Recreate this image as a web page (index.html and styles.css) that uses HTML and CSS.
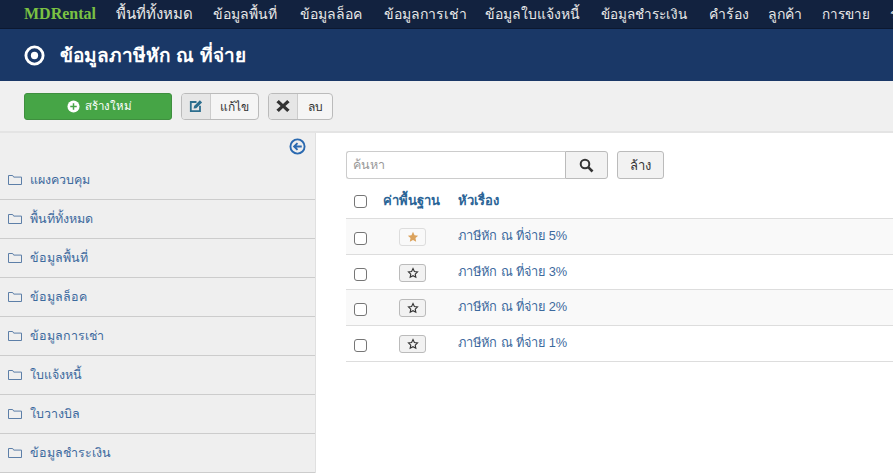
FILE: index.html
```html
<!DOCTYPE html>
<html lang="th">
<head>
<meta charset="utf-8">
<title>ข้อมูลภาษีหัก ณ ที่จ่าย</title>
<link rel="stylesheet" href="styles.css">
</head>
<body>
<nav class="nav">
  <a class="brand">MDRental</a>
  <a class="nav-item">พื้นที่ทั้งหมด</a>
  <a class="nav-item">ข้อมูลพื้นที่</a>
  <a class="nav-item">ข้อมูลล็อค</a>
  <a class="nav-item">ข้อมูลการเช่า</a>
  <a class="nav-item">ข้อมูลใบแจ้งหนี้</a>
  <a class="nav-item">ข้อมูลชำระเงิน</a>
  <a class="nav-item">คำร้อง</a>
  <a class="nav-item">ลูกค้า</a>
  <a class="nav-item">การขาย</a>
  <a class="nav-item">รายงาน</a>
</nav>
<header class="title-bar">
  <svg class="title-icon" viewBox="0 0 22 22"><circle cx="11" cy="11" r="9" fill="none" stroke="#fff" stroke-width="3"/><circle cx="11" cy="11" r="3.8" fill="#fff"/></svg>
  <h1 class="title">ข้อมูลภาษีหัก ณ ที่จ่าย</h1>
</header>
<div class="toolbar">
  <button class="btn-new">
    <svg class="plus" viewBox="0 0 14 14"><circle cx="7" cy="7" r="6.5" fill="#fff"/><path d="M7 3.5v7M3.5 7h7" stroke="#46a546" stroke-width="1.6"/></svg>
    สร้างใหม่
  </button>
  <div class="btn-group edit">
    <span class="btn-icon"><svg viewBox="0 0 14 14" width="14" height="14"><path d="M7.5 3H1.8v9.2H11V6.8" fill="none" stroke="#2d6e8e" stroke-width="1.8"/><path d="M4.6 9.6l.5-2.6 5.8-5.8 2.2 2.2-5.8 5.8z" fill="#2d6e8e"/></svg></span>
    <span class="btn-label">แก้ไข</span>
  </div>
  <div class="btn-group del">
    <span class="btn-icon"><svg viewBox="0 0 14 14" width="14" height="14"><path d="M2.8 1L7 5 11.2 1 13.6 3.2 9.4 7l4.2 3.8-2.4 2.2L7 9 2.8 13 .4 10.8 4.6 7 .4 3.2z" fill="#333"/></svg></span>
    <span class="btn-label">ลบ</span>
  </div>
</div>
<div class="main">
  <aside class="sidebar">
    <div class="collapse">
      <svg viewBox="0 0 18 18" width="17" height="17"><circle cx="9" cy="9" r="7.5" fill="none" stroke="#2a69b0" stroke-width="2"/><path d="M13.5 9H6M9 5.4L5.4 9 9 12.6" fill="none" stroke="#2a69b0" stroke-width="2"/></svg>
    </div>
    <ul class="side-list">
      <li class="side-item"><svg class="folder" viewBox="0 0 14 12"><path d="M.5 10.5v-9h4.2l1 1.6h7.8v7.4z" fill="none" stroke="#5d7fa8"/></svg>แผงควบคุม</li>
      <li class="side-item"><svg class="folder" viewBox="0 0 14 12"><path d="M.5 10.5v-9h4.2l1 1.6h7.8v7.4z" fill="none" stroke="#5d7fa8"/></svg>พื้นที่ทั้งหมด</li>
      <li class="side-item"><svg class="folder" viewBox="0 0 14 12"><path d="M.5 10.5v-9h4.2l1 1.6h7.8v7.4z" fill="none" stroke="#5d7fa8"/></svg>ข้อมูลพื้นที่</li>
      <li class="side-item"><svg class="folder" viewBox="0 0 14 12"><path d="M.5 10.5v-9h4.2l1 1.6h7.8v7.4z" fill="none" stroke="#5d7fa8"/></svg>ข้อมูลล็อค</li>
      <li class="side-item"><svg class="folder" viewBox="0 0 14 12"><path d="M.5 10.5v-9h4.2l1 1.6h7.8v7.4z" fill="none" stroke="#5d7fa8"/></svg>ข้อมูลการเช่า</li>
      <li class="side-item"><svg class="folder" viewBox="0 0 14 12"><path d="M.5 10.5v-9h4.2l1 1.6h7.8v7.4z" fill="none" stroke="#5d7fa8"/></svg>ใบแจ้งหนี้</li>
      <li class="side-item"><svg class="folder" viewBox="0 0 14 12"><path d="M.5 10.5v-9h4.2l1 1.6h7.8v7.4z" fill="none" stroke="#5d7fa8"/></svg>ใบวางบิล</li>
      <li class="side-item"><svg class="folder" viewBox="0 0 14 12"><path d="M.5 10.5v-9h4.2l1 1.6h7.8v7.4z" fill="none" stroke="#5d7fa8"/></svg>ข้อมูลชำระเงิน</li>
    </ul>
  </aside>
  <section class="content">
    <div class="search-row">
      <div class="search">
        <input class="search-input" type="text" placeholder="ค้นหา">
        <span class="search-btn"><svg viewBox="0 0 15 15" width="15" height="15"><circle cx="6" cy="6" r="4.3" fill="none" stroke="#333" stroke-width="2"/><path d="M9.2 9.2l4.3 4.3" stroke="#333" stroke-width="2.6"/></svg></span>
      </div>
      <button class="btn-clear">ล้าง</button>
    </div>
    <div class="row head">
      <span class="cell-check"><input type="checkbox" class="check"></span>
      <span class="cell-default head-text">ค่าพื้นฐาน</span>
      <span class="cell-title head-text">หัวเรื่อง</span>
    </div>
    <div class="row odd">
      <span class="cell-check"><input type="checkbox" class="check"></span>
      <span class="cell-default"><span class="star-btn on"><svg viewBox="0 0 14 14" width="12" height="12"><path d="M7 1l1.8 3.9 4.2.5-3.1 2.9.8 4.2L7 10.5 3.3 12.5l.8-4.2L1 5.4l4.2-.5z" fill="#dba25c"/></svg></span></span>
      <span class="cell-title">ภาษีหัก ณ ที่จ่าย 5%</span>
    </div>
    <div class="row short">
      <span class="cell-check"><input type="checkbox" class="check"></span>
      <span class="cell-default"><span class="star-btn"><svg viewBox="0 0 14 14" width="12" height="12"><path d="M7 1.8l1.6 3.4 3.7.5-2.7 2.6.7 3.7L7 10.2l-3.3 1.8.7-3.7-2.7-2.6 3.7-.5z" fill="none" stroke="#333" stroke-width="1.3"/></svg></span></span>
      <span class="cell-title">ภาษีหัก ณ ที่จ่าย 3%</span>
    </div>
    <div class="row odd">
      <span class="cell-check"><input type="checkbox" class="check"></span>
      <span class="cell-default"><span class="star-btn"><svg viewBox="0 0 14 14" width="12" height="12"><path d="M7 1.8l1.6 3.4 3.7.5-2.7 2.6.7 3.7L7 10.2l-3.3 1.8.7-3.7-2.7-2.6 3.7-.5z" fill="none" stroke="#333" stroke-width="1.3"/></svg></span></span>
      <span class="cell-title">ภาษีหัก ณ ที่จ่าย 2%</span>
    </div>
    <div class="row">
      <span class="cell-check"><input type="checkbox" class="check"></span>
      <span class="cell-default"><span class="star-btn"><svg viewBox="0 0 14 14" width="12" height="12"><path d="M7 1.8l1.6 3.4 3.7.5-2.7 2.6.7 3.7L7 10.2l-3.3 1.8.7-3.7-2.7-2.6 3.7-.5z" fill="none" stroke="#333" stroke-width="1.3"/></svg></span></span>
      <span class="cell-title">ภาษีหัก ณ ที่จ่าย 1%</span>
    </div>
  </section>
</div>
</body>
</html>
```
FILE: styles.css
```css
* { box-sizing: border-box; }
html, body { margin: 0; padding: 0; }
body {
  width: 893px;
  height: 473px;
  overflow: hidden;
  background: #fff;
  font-family: "Liberation Sans", "Noto Sans", sans-serif;
  font-size: 13px;
  color: #333;
}
.nav {
  display: flex;
  align-items: center;
  height: 29px;
  padding-left: 24px;
  background: #12223f;
  border-bottom: 1px solid #0c1830;
  white-space: nowrap;
  overflow: hidden;
}
.brand {
  font-family: "Liberation Serif", serif;
  font-weight: 700;
  font-size: 16px;
  color: #7ac143;
  margin-right: 20px;
}
.nav-item {
  color: #e8e8e8;
  font-size: 14px;
  flex: none;
}
.nav-item:nth-child(2) { width: 97px; font-size: 15px; }
.nav-item:nth-child(3) { width: 87px; }
.nav-item:nth-child(4) { width: 84px; }
.nav-item:nth-child(5) { width: 101px; }
.nav-item:nth-child(6) { width: 116px; }
.nav-item:nth-child(7) { width: 108px; font-size: 13.5px; }
.nav-item:nth-child(8) { width: 59px; }
.nav-item:nth-child(9) { width: 54px; }
.nav-item:nth-child(10) { width: 68px; font-size: 13.5px; }
.title-bar {
  display: flex;
  align-items: center;
  height: 52px;
  padding-left: 24px;
  background: #1a3867;
}
.title-icon { width: 21px; height: 21px; margin-right: 15px; }
.title {
  margin: 0;
  font-size: 19px;
  font-weight: 700;
  color: #fff;
}
.toolbar {
  display: flex;
  align-items: center;
  gap: 9px;
  height: 52px;
  padding-left: 24px;
  background: #f0f0f0;
  border-bottom: 2px solid #e4e4e4;
}
.btn-new {
  display: flex;
  align-items: center;
  justify-content: center;
  gap: 5px;
  width: 148px;
  height: 27px;
  padding: 0 0 0 2px;
  background: #46a546;
  border: 1px solid #3f8f3f;
  border-radius: 3px;
  color: #fff;
  font: inherit;
  font-size: 11.5px;
}
.plus { width: 13px; height: 13px; }
.btn-group {
  display: flex;
  height: 27px;
  border: 1px solid #bbb;
  border-radius: 4px;
  background: #f5f5f5;
  overflow: hidden;
}
.btn-group.edit { width: 78px; }
.btn-group.del { width: 65px; }
.btn-icon {
  display: flex;
  align-items: center;
  justify-content: center;
  flex: none;
  width: 29px;
  background: #e6e6e6;
  border-right: 1px solid #ccc;
}
.btn-label {
  display: flex;
  align-items: center;
  justify-content: center;
  flex: 1;
  font-size: 12px;
}
.main { display: flex; height: 340px; }
.sidebar {
  width: 316px;
  flex: none;
  background: #efefef;
  border-right: 1px solid #e0e0e0;
}
.collapse {
  display: flex;
  justify-content: flex-end;
  height: 28px;
  padding: 5px 9px 0 0;
}
.side-list { list-style: none; margin: 0; padding: 0; }
.side-item {
  display: flex;
  align-items: center;
  height: 39px;
  padding-left: 8px;
  color: #3d6a9e;
  font-size: 12.5px;
  border-bottom: 1px solid #ccc;
}
.folder { width: 14px; height: 12px; margin-right: 8px; flex: none; }
.content { flex: 1; padding: 18px 0 0 30px; min-width: 0; }
.search-row { display: flex; gap: 9px; height: 28px; }
.search { display: flex; width: 262px; }
.search-input {
  flex: 1;
  min-width: 0;
  height: 28px;
  padding: 0 6px;
  border: 1px solid #ccc;
  border-right: 0;
  border-radius: 3px 0 0 3px;
  font: inherit;
  font-size: 12.5px;
  outline: none;
}
.search-input::placeholder { color: #999; }
.search-btn {
  display: flex;
  align-items: center;
  justify-content: center;
  width: 43px;
  background: #f2f2f2;
  border: 1px solid #bbb;
  border-radius: 0 3px 3px 0;
}
.btn-clear {
  width: 47px;
  height: 28px;
  padding: 0;
  background: #f2f2f2;
  border: 1px solid #bbb;
  border-radius: 3px;
  font: inherit;
  font-size: 13px;
  color: #333;
}
.row {
  display: flex;
  align-items: center;
  height: 36px;
  border-bottom: 1px solid #ddd;
}
.row.odd { background: #f9f9f9; }
.row.short { height: 35px; }
.row.head { height: 40px; padding-top: 3px; }
.cell-check { width: 29px; padding-left: 8px; flex: none; display: flex; }
.cell-default { width: 83px; flex: none; padding: 1px 8px 0 0; display: flex; justify-content: center; }
.cell-title { color: #3d6a9e; font-size: 12.8px; padding-bottom: 2px; }
.head-text { color: #2a6496; font-weight: 700; font-size: 13px; padding: 0; }
.cell-default.head-text { justify-content: flex-start; padding-left: 8px; }
.check {
  appearance: none;
  width: 13px;
  height: 13px;
  margin: 4px 0 0;
  background: #fff;
  border: 1px solid #767676;
  border-radius: 3px;
}
.head .check { margin-top: 2px; }
.star-btn {
  display: flex;
  align-items: center;
  justify-content: center;
  width: 27px;
  height: 18px;
  background: #f2f2f2;
  border: 1px solid #bbb;
  border-radius: 3px;
}
.star-btn.on { background: #f9f9f9; border-color: #ddd; }
```
